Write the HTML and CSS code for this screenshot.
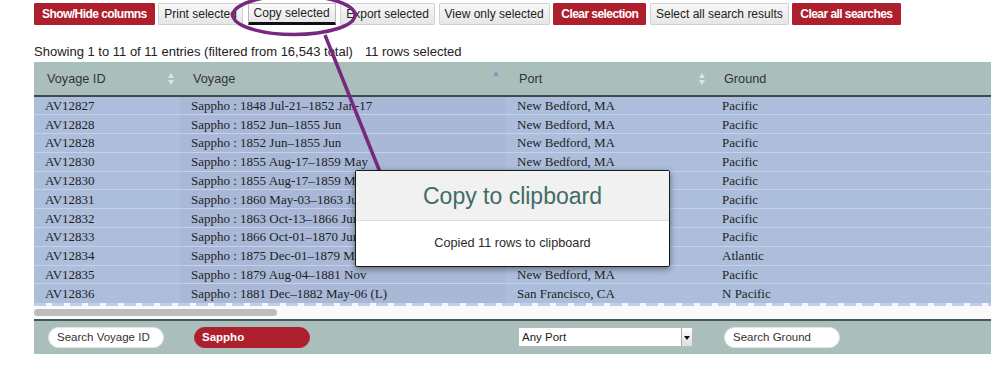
FILE: index.html
```html
<!DOCTYPE html>
<html>
<head>
<meta charset="utf-8">
<link rel="stylesheet" href="styles.css">
</head>
<body>
<div class="page">
  <div class="toolbar">
    <button class="btn btn-red">Show/Hide columns</button>
    <button class="btn">Print selected</button>
    <button class="btn btn-pressed">Copy selected</button>
    <button class="btn">Export selected</button>
    <button class="btn">View only selected</button>
    <button class="btn btn-red">Clear selection</button>
    <button class="btn">Select all search results</button>
    <button class="btn btn-red">Clear all searches</button>
  </div>
  <div class="info"><span>Showing 1 to 11 of 11 entries (filtered from 16,543 total)</span><span class="sel">11 rows selected</span></div>

  <table class="grid">
    <colgroup><col class="c1"><col class="c2"><col class="c3"><col class="c4"></colgroup>
    <thead>
      <tr>
        <th>Voyage ID<span class="sort both"></span></th>
        <th>Voyage<span class="sort asc"></span></th>
        <th>Port<span class="sort both"></span></th>
        <th>Ground</th>
      </tr>
    </thead>
    <tbody>
      <tr><td>AV12827</td><td class="sorted">Sappho : 1848 Jul-21–1852 Jan-17</td><td>New Bedford, MA</td><td>Pacific</td></tr>
      <tr><td>AV12828</td><td class="sorted">Sappho : 1852 Jun–1855 Jun</td><td>New Bedford, MA</td><td>Pacific</td></tr>
      <tr><td>AV12828</td><td class="sorted">Sappho : 1852 Jun–1855 Jun</td><td>New Bedford, MA</td><td>Pacific</td></tr>
      <tr><td>AV12830</td><td class="sorted">Sappho : 1855 Aug-17–1859 May</td><td>New Bedford, MA</td><td>Pacific</td></tr>
      <tr><td>AV12830</td><td class="sorted">Sappho : 1855 Aug-17–1859 May</td><td>New Bedford, MA</td><td>Pacific</td></tr>
      <tr><td>AV12831</td><td class="sorted">Sappho : 1860 May-03–1863 Jun</td><td>New Bedford, MA</td><td>Pacific</td></tr>
      <tr><td>AV12832</td><td class="sorted">Sappho : 1863 Oct-13–1866 Jun</td><td>New Bedford, MA</td><td>Pacific</td></tr>
      <tr><td>AV12833</td><td class="sorted">Sappho : 1866 Oct-01–1870 Jun</td><td>New Bedford, MA</td><td>Pacific</td></tr>
      <tr><td>AV12834</td><td class="sorted">Sappho : 1875 Dec-01–1879 May</td><td>New Bedford, MA</td><td>Atlantic</td></tr>
      <tr><td>AV12835</td><td class="sorted">Sappho : 1879 Aug-04–1881 Nov</td><td>New Bedford, MA</td><td>Pacific</td></tr>
      <tr><td>AV12836</td><td class="sorted">Sappho : 1881 Dec–1882 May-06 (L)</td><td>San Francisco, CA</td><td>N Pacific</td></tr>
    </tbody>
  </table>
  <div class="edge"></div>
  <div class="scrollbar"><div class="thumb"></div></div>
  <div class="filters">
    <div class="fcell f1"><div class="pill">Search Voyage ID</div></div>
    <div class="fcell f2"><div class="pill pill-red">Sappho</div></div>
    <div class="fcell f3"><div class="select"><span>Any Port</span><span class="arrow"></span></div></div>
    <div class="fcell f4"><div class="pill">Search Ground</div></div>
  </div>

  <div class="modal">
    <div class="modal-head">Copy to clipboard</div>
    <div class="modal-body">Copied 11 rows to clipboard</div>
  </div>

  <svg class="annot" width="1000" height="381" viewBox="0 0 1000 381">
    <ellipse cx="294" cy="15" rx="61" ry="19.5" fill="none" stroke="#78287f" stroke-width="3.5"/>
    <line x1="325" y1="35" x2="380" y2="172" stroke="#78287f" stroke-width="3.5"/>
  </svg>
</div>
</body>
</html>
```

FILE: styles.css
```css
* { box-sizing: border-box; }
html, body { margin: 0; padding: 0; background: #fff; }
body { font-family: "Liberation Sans", Arial, sans-serif; color: #222; }

.page { position: relative; width: 1000px; height: 381px; padding: 3px 0 0 34px; overflow: hidden; }

.toolbar { display: flex; gap: 3.6px; height: 22px; }
.btn {
  font-family: "Liberation Sans", Arial, sans-serif;
  font-size: 12px; height: 22px; padding: 0 5px; margin: 0;
  border: 1px solid #d2d2d2; border-radius: 1px;
  background: linear-gradient(#f7f7f7, #e6e6e6);
  color: #222; white-space: nowrap;
}
.btn-red { background: #ad1f2d; border-color: #ad1f2d; color: #fff; font-weight: bold; letter-spacing: -0.55px; padding: 0 7px; }
.btn-pressed { border-color: #bbb; border-bottom: 3px solid #111; margin: 0 1px; background: linear-gradient(#fafafa, #e8e8e8); }

.info { margin-top: 19px; height: 16px; font-size: 13px; line-height: 16px; color: #222; display: flex; gap: 12px; }

.grid { margin-top: 2px; width: 957px; border-collapse: collapse; table-layout: fixed; }
.c1 { width: 146px; } .c2 { width: 326px; } .c3 { width: 205px; } .c4 { width: 280px; }
.grid th {
  position: relative; height: 34px; padding: 0 13px; text-align: left;
  font-weight: normal; font-size: 12.7px; color: #333;
  background: #aabfbb; border-bottom: 2px solid #3c4a4a;
}
.sort { position: absolute; right: 5px; top: 50%; width: 7px; height: 12px; margin-top: -6px; }
.sort.both::before, .sort.both::after, .sort.asc::before {
  content: ""; position: absolute; left: 0; border-left: 3.5px solid transparent; border-right: 3.5px solid transparent;
}
.sort.both::before { top: 0; border-bottom: 5px solid #dde4e4; }
.sort.both::after { bottom: 0; border-top: 5px solid #dde4e4; }
.sort.asc { right: 6px; }
.sort.asc::before { top: -2px; border-bottom: 5px solid #8c92d6; }

.grid td {
  height: 18.8px; padding: 0 11px; font-family: "Liberation Serif", "Times New Roman", serif;
  font-size: 13px; line-height: 17px; color: #1e1e1e; white-space: nowrap; overflow: hidden;
  background: #adbedc; border-top: 1.5px solid #c6d1e7;
}
.grid td.sorted { background: #a8b8d6; }
.grid tbody tr:first-child td { border-top: none; }

.edge { width: 957px; height: 3px; background: repeating-linear-gradient(90deg, #c2cee6 0 12px, #f4f6fb 12px 18px); }
.scrollbar { width: 957px; height: 13px; background: #fafafa; padding-top: 3px; }
.thumb { width: 243px; height: 7px; border-radius: 4px; background: #bdbdbd; }

.filters { width: 957px; height: 35px; background: #aabfbb; border-top: 2px solid #4a5656; display: flex; align-items: center; }
.fcell { height: 100%; display: flex; align-items: center; }
.f1 { width: 146px; padding-left: 14px; }
.f2 { width: 326px; padding-left: 14px; }
.f3 { width: 205px; padding-left: 12px; }
.f4 { width: 280px; padding-left: 13px; }
.pill {
  width: 116px; height: 21px; border-radius: 11px; background: #fff; border: 1px solid #e6e6e6;
  font-size: 11.5px; line-height: 19px; padding-left: 8px; color: #333;
}
.pill-red { background: #ad1f2d; border-color: #ad1f2d; color: #fff; font-weight: bold; padding-left: 7px; }
.select {
  width: 175px; height: 20px; background: #fff; border: 1px solid #b9b9b9; display: flex; justify-content: space-between;
  font-size: 11.5px; line-height: 18px; padding-left: 3px; color: #222;
}
.select .arrow { position: relative; width: 11px; height: 100%; border-left: 1px solid #aaa; background: linear-gradient(#fff, #ddd); }
.select .arrow::after { content: ""; position: absolute; left: 2px; top: 8px; border-left: 3px solid transparent; border-right: 3px solid transparent; border-top: 4px solid #111; }

.modal {
  position: absolute; left: 355px; top: 170px; width: 315px; height: 97px;
  border: 1.5px solid #1a1a1a; background: #fff; box-shadow: 0 2px 6px rgba(0,0,0,0.45);
  border-radius: 2px; overflow: hidden; z-index: 3;
}
.modal-head { height: 50px; background: #f1f1f1; border-bottom: 1px solid #dcdcdc; text-align: center; font-size: 23px; line-height: 50px; color: #426c66; }
.modal-body { text-align: center; font-size: 12.7px; line-height: 44px; color: #2a2a2a; }

.annot { position: absolute; left: 0; top: 0; z-index: 2; pointer-events: none; }
```
